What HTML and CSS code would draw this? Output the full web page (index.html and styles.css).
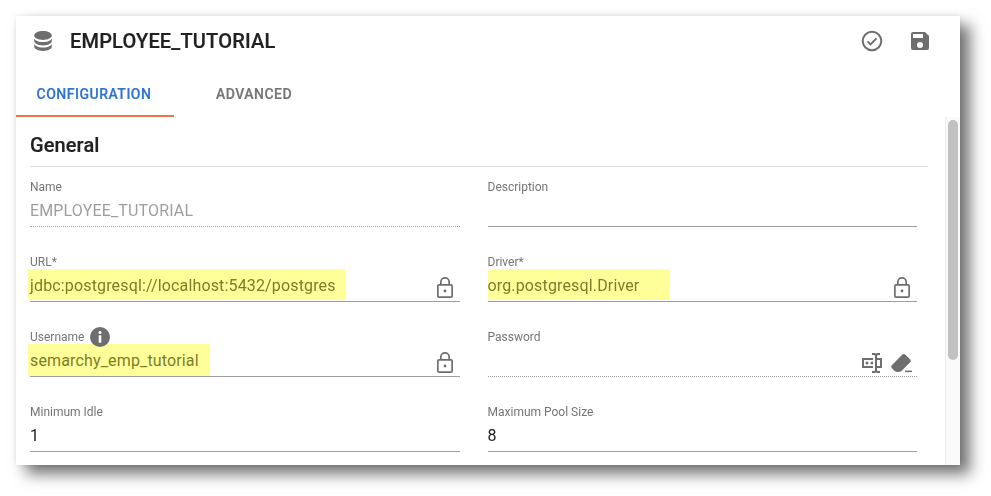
FILE: index.html
```html
<!DOCTYPE html>
<html lang="en">
<head>
<meta charset="utf-8">
<title>EMPLOYEE_TUTORIAL</title>
<link rel="stylesheet" href="styles.css">
</head>
<body>
<main class="card">
  <header class="header">
    <svg class="icon icon-db" viewBox="0 0 24 24"><path d="M12,3C7.58,3 4,4.79 4,7C4,9.21 7.58,11 12,11C16.42,11 20,9.21 20,7C20,4.79 16.42,3 12,3M4,9V12C4,14.21 7.58,16 12,16C16.42,16 20,14.21 20,12V9C20,11.21 16.42,13 12,13C7.58,13 4,11.21 4,9M4,14V17C4,19.21 7.58,21 12,21C16.42,21 20,19.21 20,17V14C20,16.21 16.42,18 12,18C7.58,18 4,16.21 4,14Z"/></svg>
    <h1 class="title">EMPLOYEE_TUTORIAL</h1>
    <svg class="icon icon-check" viewBox="0 0 24 24"><circle class="line" cx="12" cy="12" r="9.3"/><path class="line" d="M7.6 12.4l3 3 5.8-6"/></svg>
    <svg class="icon icon-save" viewBox="0 0 24 24"><path d="M15,9H5V5H15M12,19A3,3 0 0,1 9,16A3,3 0 0,1 12,13A3,3 0 0,1 15,16A3,3 0 0,1 12,19M17,3H5C3.89,3 3,3.9 3,5V19A2,2 0 0,0 5,21H19A2,2 0 0,0 21,19V7L17,3Z"/></svg>
  </header>
  <nav class="tabs">
    <div class="tab tab-active">CONFIGURATION</div>
    <div class="tab tab-second">ADVANCED</div>
  </nav>
  <div class="body">
    <section class="content">
      <h2 class="section-title">General</h2>
      <div class="grid">
        <div class="field">
          <div class="label">Name</div>
          <div class="control dotted"><span class="value muted">EMPLOYEE_TUTORIAL</span></div>
        </div>
        <div class="field">
          <div class="label">Description</div>
          <div class="control"></div>
        </div>
        <div class="field">
          <div class="label">URL*</div>
          <div class="control">
            <span class="value hl hl-url">jdbc:postgresql://localhost:5432/postgres</span>
            <svg class="icon icon-lock" viewBox="0 0 24 24"><path d="M12,16.4C11.2,16.4 10.6,15.8 10.6,15C10.6,14.2 11.2,13.6 12,13.6A1.4,1.4 0 0,1 13.4,15A1.4,1.4 0 0,1 12,16.4M18.3,20.3V9.7H5.7V20.3H18.3M18,8A2,2 0 0,1 20,10V20A2,2 0 0,1 18,22H6C4.89,22 4,21.1 4,20V10C4,8.89 4.89,8 6,8H7V6A5,5 0 0,1 12,1A5,5 0 0,1 17,6V8H18M12,2.7A3.3,3.3 0 0,0 8.7,6V8H15.3V6A3.3,3.3 0 0,0 12,2.7Z"/></svg>
          </div>
        </div>
        <div class="field">
          <div class="label">Driver*</div>
          <div class="control">
            <span class="value hl hl-flush">org.postgresql.Driver</span>
            <svg class="icon icon-lock" viewBox="0 0 24 24"><path d="M12,16.4C11.2,16.4 10.6,15.8 10.6,15C10.6,14.2 11.2,13.6 12,13.6A1.4,1.4 0 0,1 13.4,15A1.4,1.4 0 0,1 12,16.4M18.3,20.3V9.7H5.7V20.3H18.3M18,8A2,2 0 0,1 20,10V20A2,2 0 0,1 18,22H6C4.89,22 4,21.1 4,20V10C4,8.89 4.89,8 6,8H7V6A5,5 0 0,1 12,1A5,5 0 0,1 17,6V8H18M12,2.7A3.3,3.3 0 0,0 8.7,6V8H15.3V6A3.3,3.3 0 0,0 12,2.7Z"/></svg>
          </div>
        </div>
        <div class="field">
          <div class="label label-info">Username
            <svg class="icon icon-info" viewBox="0 0 20 20"><circle cx="10" cy="10" r="10"/><circle class="knock" cx="10" cy="5.6" r="1.5"/><rect class="knock" x="8.7" y="8.3" width="2.6" height="7.4"/></svg>
          </div>
          <div class="control">
            <span class="value hl hl-user">semarchy_emp_tutorial</span>
            <svg class="icon icon-lock" viewBox="0 0 24 24"><path d="M12,16.4C11.2,16.4 10.6,15.8 10.6,15C10.6,14.2 11.2,13.6 12,13.6A1.4,1.4 0 0,1 13.4,15A1.4,1.4 0 0,1 12,16.4M18.3,20.3V9.7H5.7V20.3H18.3M18,8A2,2 0 0,1 20,10V20A2,2 0 0,1 18,22H6C4.89,22 4,21.1 4,20V10C4,8.89 4.89,8 6,8H7V6A5,5 0 0,1 12,1A5,5 0 0,1 17,6V8H18M12,2.7A3.3,3.3 0 0,0 8.7,6V8H15.3V6A3.3,3.3 0 0,0 12,2.7Z"/></svg>
          </div>
        </div>
        <div class="field">
          <div class="label">Password</div>
          <div class="control dotted">
            <svg class="icon icon-pass" viewBox="0 0 24 24"><path d="M17,7H22V17H17V19A1,1 0 0,0 18,20H20V22H17.5C16.95,22 16,21.55 16,21C16,21.55 15.05,22 14.5,22H12V20H14A1,1 0 0,0 15,19V5A1,1 0 0,0 14,4H12V2H14.5C15.05,2 16,2.45 16,3C16,2.45 16.95,2 17.5,2H20V4H18A1,1 0 0,0 17,5V7M2,7H13V9H4V15H13V17H2V7M20,15V9H17V15H20M8.5,12A1.5,1.5 0 0,0 7,10.5A1.5,1.5 0 0,0 5.5,12A1.5,1.5 0 0,0 7,13.5A1.5,1.5 0 0,0 8.5,12M13,10.89C12.39,10.33 11.44,10.38 10.88,11C10.32,11.6 10.37,12.55 11,13.11C11.55,13.63 12.43,13.63 13,13.11V10.89Z"/></svg>
            <svg class="icon icon-erase" viewBox="0 0 24 24"><path d="M16.24,3.56L21.19,8.5C21.97,9.29 21.97,10.55 21.19,11.34L13,19.5C12,20.5 11,20.9 9.5,20.9H8C7,20.9 6,20.4 5.3,19.7L2.81,17C2.03,16.21 2.03,14.95 2.81,14.16L13.41,3.56C14.2,2.78 15.46,2.78 16.24,3.56Z"/><rect x="16" y="19.6" width="7" height="1.5"/></svg>
          </div>
        </div>
        <div class="field">
          <div class="label">Minimum Idle</div>
          <div class="control"><span class="value">1</span></div>
        </div>
        <div class="field">
          <div class="label">Maximum Pool Size</div>
          <div class="control"><span class="value">8</span></div>
        </div>
      </div>
    </section>
    <aside class="scrollbar"><div class="thumb"></div></aside>
  </div>
</main>
</body>
</html>
```

FILE: styles.css
```css
* { box-sizing: border-box; }

html, body { height: 100%; }

body {
  margin: 0;
  padding: 16px 31px 31px 16px;
  background: #fff;
  font-family: Roboto, "Liberation Sans", sans-serif;
  color: #212121;
  overflow: hidden;
}

.card {
  height: 449px;
  background: #fff;
  display: flex;
  flex-direction: column;
  overflow: hidden;
  box-shadow: 10px 9px 14px rgba(0, 0, 0, 0.55), 0 0 6px rgba(0, 0, 0, 0.1);
  filter: blur(0.35px);
}

.icon { display: block; flex: none; fill: #6e6e6e; }
.line { fill: none; stroke: #6e6e6e; stroke-width: 2; }

.header {
  height: 50px;
  margin-bottom: 3px;
  display: flex;
  align-items: center;
  padding: 0 28px 0 14px;
}

.icon-db { width: 24px; height: 24px; transform: translateX(1px) scale(1.1); }

.title {
  margin: 0 0 0 16px;
  flex: 1;
  font-size: 20px;
  font-weight: 500;
  line-height: 24px;
  letter-spacing: 0.18px;
  -webkit-text-stroke: 0.2px currentColor;
}

.icon-check { width: 24px; height: 24px; }
.icon-save { width: 24px; height: 24px; margin-left: 24px; }

.tabs { display: flex; height: 48px; }

.tab {
  width: 158px;
  display: flex;
  align-items: center;
  justify-content: center;
  padding: 3px 2px 0 0;
  font-size: 14px;
  font-weight: 500;
  color: #757575;
  letter-spacing: 0.5px;
  border-bottom: 2px solid transparent;
  -webkit-text-stroke: 0.2px currentColor;
}

.tab-active { color: #2f74d0; border-bottom-color: #f2704a; }
.tab-second { padding: 3px 0 0 2px; }

.body { flex: 1; display: flex; min-height: 0; }

.content { flex: 1; padding: 0 17px 0 14px; min-width: 0; }

.section-title {
  margin: 0;
  height: 50px;
  padding-top: 16px;
  font-size: 20px;
  font-weight: 500;
  line-height: 24px;
  letter-spacing: 0.1px;
  border-bottom: 1px solid #dedede;
  -webkit-text-stroke: 0.2px currentColor;
}

.grid {
  display: grid;
  grid-template-columns: 1fr 1fr;
  column-gap: 28px;
  row-gap: 0;
  margin-right: 11px;
  padding-top: 13px;
}

.field { height: 75px; }

.label {
  height: 14px;
  display: flex;
  align-items: center;
  font-size: 12px;
  line-height: 14px;
  color: #757575;
}

.label-info { position: relative; z-index: 1; }

.icon-info { width: 20px; height: 20px; margin-left: 6px; }
.knock { fill: #fff; }

.control {
  height: 33px;
  display: flex;
  align-items: flex-end;
  border-bottom: 1px solid #9e9e9e;
}

.dotted { border-bottom: 1px dotted #9e9e9e; }

.value {
  font-size: 16px;
  line-height: 24px;
  height: 27px;
  flex: none;
  color: #212121;
  letter-spacing: 0.15px;
}

.muted { color: #9e9e9e; }

.hl {
  background: #ffff99;
  color: #7d7d2a;
  height: 31px;
  padding-top: 5px;
  margin-bottom: 1px;
}

.hl-url { width: 317px; padding-left: 2px; margin-left: -2px; }
.hl-user { width: 182px; padding-left: 2px; margin-left: -2px; height: 32px; margin-bottom: 0; padding-top: 5px; }
.hl-flush { width: 181px; }

.icon-lock { width: 24px; height: 24px; margin: 0 3px 1px auto; }
.icon-pass { width: 24px; height: 24px; margin: 0 0 1px auto; }
.icon-erase { width: 24px; height: 24px; margin: 0 4px 1px 5px; }

.scrollbar {
  flex: none;
  width: 15px;
  background: #fafafa;
  border-left: 1px solid #ececec;
  padding: 3px 2px 0 2px;
}

.thumb { height: 240px; background: #c1c1c1; border-radius: 5px; }
```
